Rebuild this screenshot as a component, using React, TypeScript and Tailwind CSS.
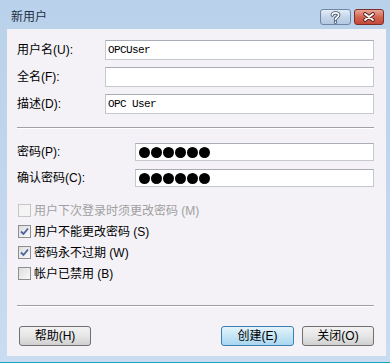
import React from 'react';

const cjk = { fontFamily: '"Liberation Sans", "Noto Sans CJK SC", sans-serif' };

const TitleButtons = () => (
  <div className="flex items-start gap-[3px] pt-[9px]">
    <div className="w-[31px] h-[16px] rounded-[3px] border border-[#6f86a4] bg-gradient-to-b from-[#e4edf7] via-[#c5d6ea] to-[#b3c8e1] flex items-center justify-center">
      <svg width="11" height="13" viewBox="0 0 11 13">
        <path d="M2.3 4 C2.3 1.2 8.7 1.2 8.7 4 C8.7 6.2 5.5 6.2 5.5 8.6" fill="none" stroke="#3d4f66" strokeWidth="3.4" strokeLinecap="round" />
        <path d="M2.3 4 C2.3 1.2 8.7 1.2 8.7 4 C8.7 6.2 5.5 6.2 5.5 8.6" fill="none" stroke="#ffffff" strokeWidth="1.7" strokeLinecap="round" />
        <circle cx="5.5" cy="11.2" r="1.6" fill="#3d4f66" />
        <circle cx="5.5" cy="11.2" r="0.85" fill="#ffffff" />
      </svg>
    </div>
    <div className="w-[30px] h-[16px] rounded-[3px] border border-[#7a2f2a] bg-gradient-to-b from-[#e8a898] via-[#d2644f] to-[#c4483a] flex items-center justify-center">
      <svg width="14" height="10" viewBox="0 0 14 10">
        <path d="M3 2 L11 8 M11 2 L3 8" stroke="#4a1a16" strokeWidth="3.6" strokeLinecap="round" />
        <path d="M3 2 L11 8 M11 2 L3 8" stroke="#ffffff" strokeWidth="2" strokeLinecap="round" />
      </svg>
    </div>
  </div>
);

const TextRow = ({ label, value }: { label: string; value: string }) => (
  <div className="flex items-center h-[20px]">
    <div className="w-[88px] text-[12px] text-black" style={cjk}>{label}</div>
    <div className="flex-1 h-[20px] bg-white border border-[#c4c9d0] border-t-[#a9aeb6] flex items-center pl-[2px] text-[11px] tracking-[-0.6px] text-black font-['Liberation_Mono',monospace] whitespace-pre">
      {value}
    </div>
  </div>
);

const PasswordRow = ({ label }: { label: string }) => (
  <div className="flex items-center h-[18px]">
    <div className="w-[118px] text-[12px] text-black" style={cjk}>{label}</div>
    <div className="flex-1 h-[18px] bg-white border border-[#c4c9d0] border-t-[#a9aeb6] flex items-center pl-[3px] gap-[1px]">
      {[0, 1, 2, 3, 4, 5].map((i) => (
        <span key={i} className="w-[11px] h-[11px] rounded-full bg-black" />
      ))}
    </div>
  </div>
);

const Check = ({ label, checked, disabled }: { label: string; checked?: boolean; disabled?: boolean }) => (
  <div className="flex items-center h-[21px] gap-[3px]">
    <span
      className={
        disabled
          ? 'w-[13px] h-[13px] border border-[#c6c6c6] bg-[#f4f4f4] flex items-center justify-center'
          : 'w-[13px] h-[13px] border border-[#8e8f8f] bg-gradient-to-br from-[#dcdcdc] to-[#fafafa] flex items-center justify-center'
      }
    >
      {checked && (
        <svg width="9" height="9" viewBox="0 0 9 9">
          <path d="M1 4.5 L3.5 7 L8 1.5" fill="none" stroke="#4b61a0" strokeWidth="1.8" />
        </svg>
      )}
    </span>
    <span className={disabled ? 'text-[12px] text-[#a0a0a0]' : 'text-[12px] text-black'} style={cjk}>
      {label}
    </span>
  </div>
);

const Btn = ({ label, primary }: { label: string; primary?: boolean }) => (
  <div
    className={
      primary
        ? 'w-[73px] h-[20px] rounded-[3px] border border-[#3c7fb1] bg-gradient-to-b from-[#e5f4fc] via-[#c4e5f6] to-[#a9d6ef] flex items-center justify-center text-[12px] text-black'
        : 'w-[72px] h-[20px] rounded-[3px] border border-[#707070] bg-gradient-to-b from-[#f2f2f2] via-[#e6e6e6] to-[#d0d0d0] flex items-center justify-center text-[12px] text-black'
    }
    style={cjk}
  >
    {label}
  </div>
);

export default function App() {
  return (
    <div className="w-[392px] h-[364px] bg-white">
      <div className="w-[390px] h-[363px] bg-gradient-to-b from-[#b9d1ea] to-[#c9dcf1] border-b border-[#1fa3b8] flex flex-col">
        <div className="h-[29px] flex justify-between pl-[11px] pr-[6px]">
          <div className="pt-[8px] text-[12px] text-[#1e2f44]" style={cjk}>新用户</div>
          <TitleButtons />
        </div>
        <div className="ml-[7px] w-[379px] h-[327px] bg-[#f4f2f7] pl-[10px] pr-[12px] pt-[11px] flex flex-col">
          <div className="flex flex-col gap-[7px]">
            <TextRow label="用户名(U):" value="OPCUser" />
            <TextRow label="全名(F):" value="" />
            <TextRow label="描述(D):" value="OPC User" />
          </div>
          <div className="mt-[13px] h-[2px] border-t border-[#a0a0a0] border-b border-b-white" />
          <div className="mt-[14px] flex flex-col gap-[8px]">
            <PasswordRow label="密码(P):" />
            <PasswordRow label="确认密码(C):" />
          </div>
          <div className="mt-[13px] pl-[1px] flex flex-col">
            <Check label="用户下次登录时须更改密码 (M)" disabled />
            <Check label="用户不能更改密码 (S)" checked />
            <Check label="密码永不过期 (W)" checked />
            <Check label="帐户已禁用 (B)" />
          </div>
          <div className="mt-[21px] h-[2px] border-t border-[#a0a0a0] border-b border-b-white" />
          <div className="mt-[19px] flex items-center pl-[2px]">
            <Btn label="帮助(H)" />
            <div className="flex-1" />
            <Btn label="创建(E)" primary />
            <div className="w-[8px]" />
            <Btn label="关闭(O)" />
          </div>
        </div>
      </div>
    </div>
  );
}
